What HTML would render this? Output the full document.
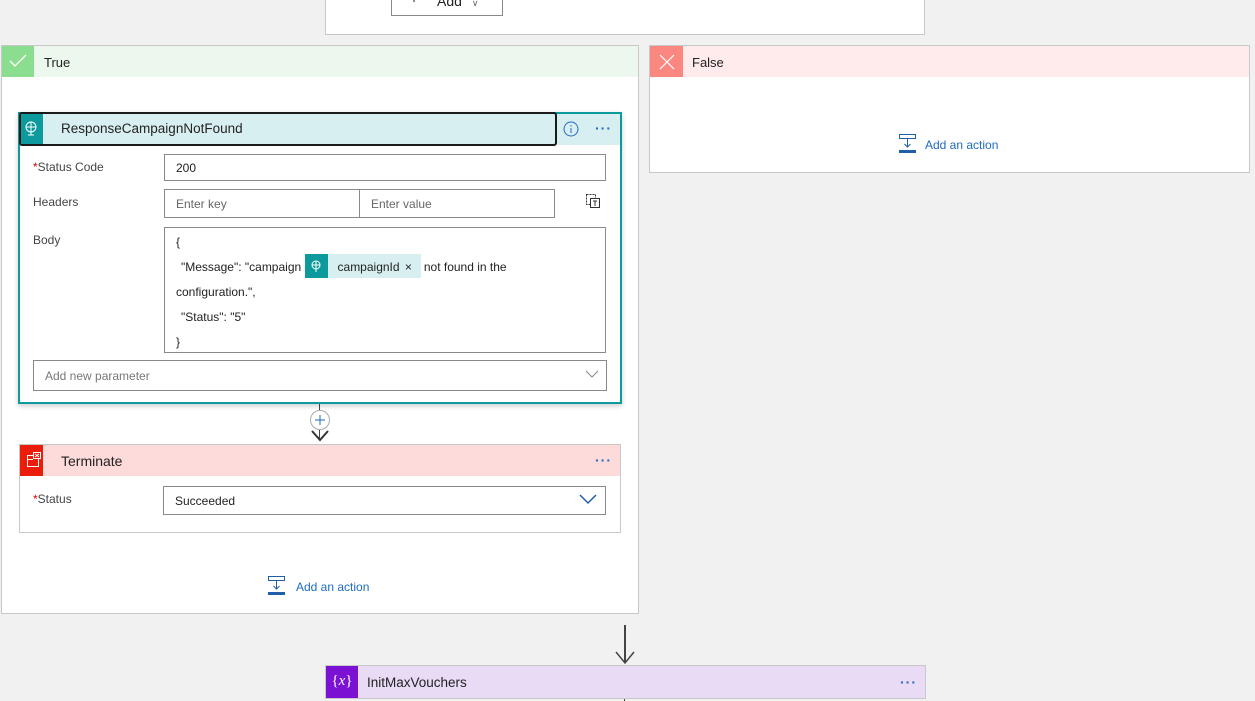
<!DOCTYPE html>
<html><head><meta charset="utf-8">
<style>
*{box-sizing:border-box;margin:0;padding:0}
body{width:1255px;height:701px;overflow:hidden;background:#f1f1f1;font-family:"Liberation Sans",sans-serif;font-size:13px;color:#222;position:relative}
.a{position:absolute}
.box{position:absolute;background:#fff;border:1px solid #c8c8c8}
.inp{position:absolute;background:#fff;border:1px solid #8a8a8a;font-size:12px;padding-left:11px;display:flex;align-items:center}
.lbl{position:absolute;font-size:12px;color:#444}
.link{color:#1f6bbf;font-size:12px}
.dots{position:absolute;color:#1f6bbf;font-size:14px;letter-spacing:1px;font-weight:bold}
</style></head><body>

<!-- top box -->
<div class="box" style="left:325px;top:-5px;width:600px;height:40px"></div>
<div class="a" style="left:391px;top:-10px;width:112px;height:26px;border:1px solid #8a8a8a;background:#fff;font-size:14px;padding:0 0 0 45px;line-height:20px">Add <span style="font-size:9px;color:#666;margin-left:6px">&#8744;</span></div>
<svg class="a" style="left:405px;top:-8px" width="18" height="12"><path d="M9 0 V10 M1 2 H17" stroke="#444" stroke-width="1.2"/></svg>

<!-- True panel -->
<div class="box" style="left:1px;top:45px;width:638px;height:569px"></div>
<div class="a" style="left:2px;top:46px;width:636px;height:31px;background:#ecf7ee"></div>
<div class="a" style="left:2px;top:46px;width:32px;height:31px;background:#8bdd8f"></div>
<svg class="a" style="left:9px;top:53px" width="18" height="16"><path d="M1 8 L6 13 L17 2" stroke="#fff" stroke-width="1.3" fill="none"/></svg>
<div class="a" style="left:44px;top:55px;font-size:13px">True</div>

<!-- False panel -->
<div class="box" style="left:649px;top:45px;width:601px;height:128px"></div>
<div class="a" style="left:650px;top:46px;width:599px;height:31px;background:#ffebeb"></div>
<div class="a" style="left:650px;top:46px;width:33px;height:31px;background:#fa8880"></div>
<svg class="a" style="left:658px;top:53px" width="18" height="18"><path d="M2 2 L16 16 M16 2 L2 16" stroke="#fff" stroke-width="1.2"/></svg>
<div class="a" style="left:692px;top:55px">False</div>
<svg class="a" style="left:899px;top:134px" width="20" height="20"><rect x="0.5" y="0.5" width="16" height="4" fill="none" stroke="#1f5fa8"/><path d="M8.5 5 V13 M5.5 10 L8.5 13 L11.5 10" stroke="#1f5fa8" fill="none"/><rect x="0" y="16" width="17" height="3" fill="#1f5fa8"/></svg>
<div class="a link" style="left:925px;top:138px">Add an action</div>

<!-- Response card -->
<div class="a" style="left:18px;top:112px;width:604px;height:292px;background:#fff;border:2px solid #0d9a9c;box-shadow:0 2px 5px rgba(0,0,0,.2)"></div>
<div class="a" style="left:20px;top:114px;width:600px;height:31px;background:#d8eff1"></div>
<div class="a" style="left:19px;top:112px;width:538px;height:34px;border:2px solid #1a1a1a;border-radius:3px"></div>
<div class="a" style="left:21px;top:114px;width:22px;height:30px;background:#0d9a9c"></div>
<svg class="a" style="left:24px;top:120px" width="16" height="18"><circle cx="7" cy="7" r="5" fill="none" stroke="#fff"/><path d="M2 7 H12 M7 2 V12 M7 12 V15 M4 15 H10" stroke="#fff"/></svg>
<div class="a" style="left:61px;top:121px;font-size:13.5px">ResponseCampaignNotFound</div>
<svg class="a" style="left:563px;top:121px" width="16" height="16"><circle cx="8" cy="8" r="7" fill="none" stroke="#1f6bbf"/><path d="M8 7 V12 M8 4 V5.5" stroke="#1f6bbf"/></svg>
<div class="dots" style="left:595px;top:120px">···</div>

<div class="lbl" style="left:33px;top:160px"><span style="color:#d00">*</span>Status Code</div>
<div class="inp" style="left:164px;top:154px;width:442px;height:27px">200</div>
<div class="lbl" style="left:33px;top:195px">Headers</div>
<div class="inp" style="left:164px;top:189px;width:196px;height:29px;color:#666">Enter key</div>
<div class="inp" style="left:359px;top:189px;width:196px;height:29px;color:#666">Enter value</div>
<svg class="a" style="left:585px;top:193px" width="16" height="16"><rect x="1.5" y="1.5" width="9" height="10" fill="none" stroke="#333" stroke-dasharray="2 1"/><rect x="5.5" y="5.5" width="9" height="9" fill="#fff" stroke="#333"/><path d="M8 8 H12 M10 8 V13" stroke="#333"/></svg>
<div class="lbl" style="left:33px;top:233px">Body</div>
<div class="inp" style="left:164px;top:227px;width:442px;height:126px;display:block;padding-top:2px;line-height:25px;font-size:12px;overflow:hidden">
{<br>
<span style="padding-left:5px">"Message": "campaign</span> <span style="display:inline-block;vertical-align:middle;height:24px;width:116px;background:#d8eff1;position:relative;margin-top:-3px;white-space:nowrap"><span style="position:absolute;left:0;top:0;width:23px;height:24px;background:#0d9a9c"></span><svg style="position:absolute;left:5px;top:5px" width="13" height="14"><circle cx="6" cy="6" r="4" fill="none" stroke="#fff"/><path d="M2 6 H10 M6 2 V13" stroke="#fff"/></svg><span style="position:absolute;left:33px;top:0;line-height:26px">campaignId <span style="margin-left:2px">×</span></span></span> not found in the<br>
configuration.",<br>
<span style="padding-left:5px">"Status": "5"</span><br>
}
</div>
<div class="inp" style="left:33px;top:360px;width:574px;height:31px;color:#777">Add new parameter</div>
<svg class="a" style="left:585px;top:370px" width="14" height="9"><path d="M1 1 L7 7 L13 1" stroke="#888" fill="none"/></svg>

<!-- connector -->
<div class="a" style="left:319px;top:404px;width:1px;height:36px;background:#444"></div>
<div class="a" style="left:310px;top:410px;width:20px;height:20px;border-radius:50%;background:#fff;border:1px solid #aaa"></div>
<svg class="a" style="left:314px;top:414px" width="12" height="12"><path d="M6 1 V11 M1 6 H11" stroke="#1f6bbf"/></svg>
<svg class="a" style="left:311px;top:430px" width="18" height="14"><path d="M1 1 L9 10 L17 1" stroke="#333" stroke-width="2" fill="none"/></svg>

<!-- Terminate -->
<div class="box" style="left:19px;top:444px;width:602px;height:89px"></div>
<div class="a" style="left:20px;top:445px;width:600px;height:31px;background:#fddbdb"></div>
<div class="a" style="left:20px;top:445px;width:23px;height:31px;background:#ec1c0a"></div>
<svg class="a" style="left:26px;top:452px" width="16" height="16"><rect x="1.5" y="3.5" width="11" height="11" fill="none" stroke="#fff"/><rect x="7.5" y="0.5" width="7" height="6" fill="#ec1c0a" stroke="#fff"/><path d="M9 2 L13 5 M13 2 L9 5 M1.5 7.5 H7" stroke="#fff"/></svg>
<div class="a" style="left:61px;top:453px;font-size:14px">Terminate</div>
<div class="dots" style="left:595px;top:452px">···</div>
<div class="lbl" style="left:33px;top:492px"><span style="color:#d00">*</span>Status</div>
<div class="inp" style="left:163px;top:486px;width:443px;height:29px">Succeeded</div>
<svg class="a" style="left:579px;top:494px" width="18" height="11"><path d="M1 1 L9 9 L17 1" stroke="#1f5fa8" stroke-width="1.5" fill="none"/></svg>

<svg class="a" style="left:268px;top:576px" width="20" height="20"><rect x="0.5" y="0.5" width="16" height="4" fill="none" stroke="#1f5fa8"/><path d="M8.5 5 V13 M5.5 10 L8.5 13 L11.5 10" stroke="#1f5fa8" fill="none"/><rect x="0" y="16" width="17" height="3" fill="#1f5fa8"/></svg>
<div class="a link" style="left:296px;top:580px">Add an action</div>

<!-- arrow -->
<div class="a" style="left:624px;top:625px;width:1.5px;height:38px;background:#444"></div>
<svg class="a" style="left:615px;top:651px" width="20" height="14"><path d="M1 1 L10 12 L19 1" stroke="#444" stroke-width="1.5" fill="none"/></svg>

<!-- InitMaxVouchers -->
<div class="a" style="left:325px;top:665px;width:601px;height:34px;background:#e9daf6;border:1px solid #c8c8c8"></div>
<div class="a" style="left:326px;top:666px;width:32px;height:32px;background:#7a11d3;color:#fff;font-family:'Liberation Serif',serif;font-size:15px;text-align:center;line-height:30px">{<i>x</i>}</div>
<div class="a" style="left:367px;top:675px;font-size:13.5px">InitMaxVouchers</div>
<div class="dots" style="left:900px;top:674px">···</div>
<div class="a" style="left:624px;top:699px;width:1px;height:2px;background:#444"></div>
</body></html>
